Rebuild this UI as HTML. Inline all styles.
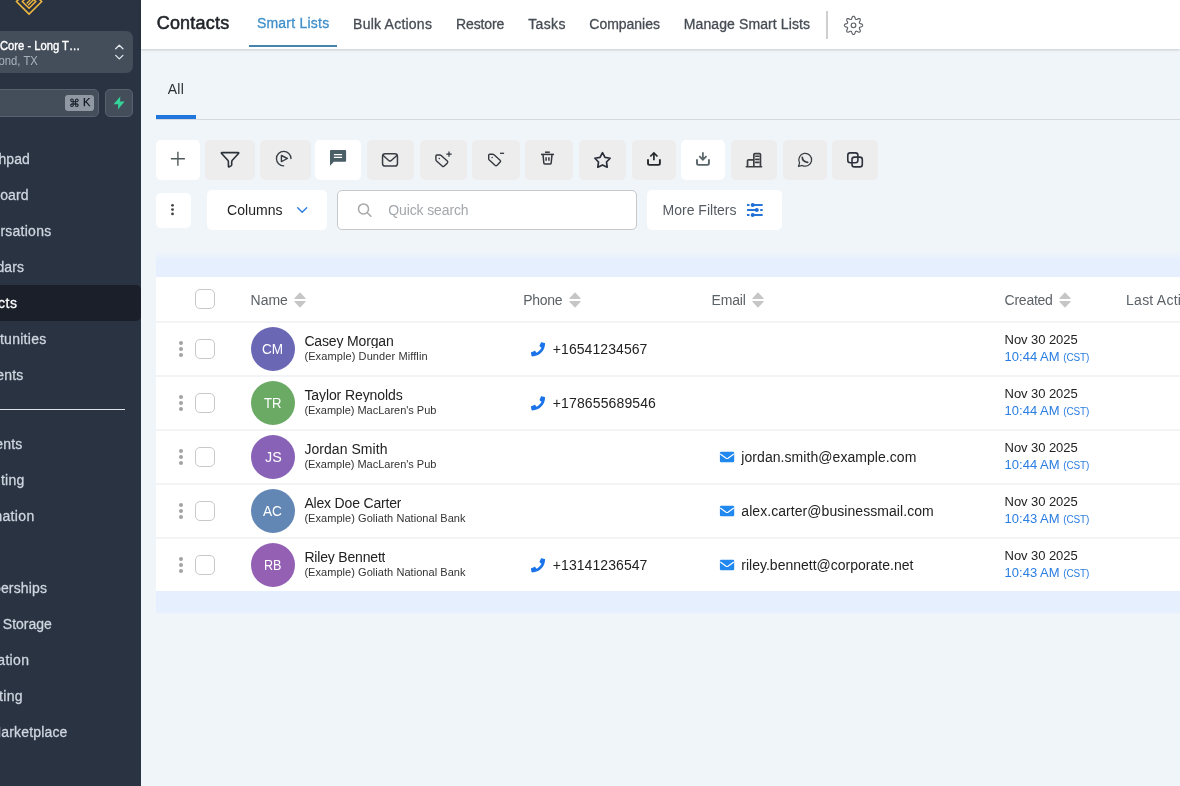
<!DOCTYPE html>
<html lang="en">
<head>
<meta charset="utf-8">
<title>Contacts</title>
<style>
*{box-sizing:border-box;margin:0;padding:0}
html,body{width:1180px;height:786px;overflow:hidden}
body{font-family:"Liberation Sans",sans-serif;background:#f0f5fa;position:relative;color:#222}
.abs{position:absolute;white-space:nowrap;line-height:1}
#txt{position:absolute;left:0;top:0;width:1180px;height:786px;overflow:hidden;will-change:transform}
.nav{font-size:14px;-webkit-text-stroke:0.28px #dfe4ea;clip-path:inset(-5px -5px -5px 0)}
/* sidebar */
#side{position:absolute;left:0;top:0;width:141px;height:786px;background:#2a3342;overflow:hidden}
#side .active{position:absolute;left:-10px;top:285px;width:151px;height:36px;background:#1b1f2a;border-radius:0 5px 5px 0}
#side .divider{position:absolute;left:0;top:409px;width:125px;height:1px;background:#dfe3e8}
#loc{position:absolute;left:-20px;top:31px;width:153px;height:42px;background:#444e5b;border-radius:7px}
#srch{position:absolute;left:-20px;top:89px;width:119px;height:28px;background:#444e5b;border:1px solid #566170;border-radius:5px}
#kbd{position:absolute;left:65px;top:95px;width:29px;height:16px;background:#9098a4;border-radius:3px}
#bolt{position:absolute;left:105px;top:89px;width:28px;height:28px;background:#444e5b;border:1px solid #566170;border-radius:5px}
svg{position:absolute;overflow:visible}
/* header */
#hdr{position:absolute;left:141px;top:0;width:1039px;height:49px;background:#fff;box-shadow:0 1px 3px rgba(0,0,0,.13),0 1px 2px rgba(0,0,0,.05)}
#tabline{position:absolute;left:249px;top:45px;width:88px;height:2px;background:#4584ad}
#vdiv{position:absolute;left:826px;top:11px;width:2px;height:28px;background:#cfcfcf}
#allbar{position:absolute;left:156px;top:115px;width:40px;height:4px;background:#2176de}
#allline{position:absolute;left:156px;top:119px;width:1024px;height:1px;background:#d5d9de}
/* buttons */
.btn{position:absolute;top:140px;height:40px;border-radius:5px;background:#ededee}
.btn.w{background:#fff}
#searchbox{position:absolute;left:337px;top:190px;width:300px;height:40px;background:#fff;border:1px solid #c8c8c8;border-radius:5px}
/* table */
#tbl{position:absolute;left:156px;top:252px;width:1024px;height:363px;background:linear-gradient(to bottom,#f0f5fa 0,#e5effd 8px,#e5effd 359.5px,#f0f5fa 362.5px)}
#tbl .white{position:absolute;left:0;top:25px;width:1024px;height:314px;background:#fff}
.hl{position:absolute;left:156px;width:1024px;height:2px;background:#f2f4f6}
.cb{position:absolute;left:195px;width:20px;height:20px;border:1px solid #c9c9c9;border-radius:5px;background:#fff}
.av{position:absolute;left:251px;width:44px;height:44px;border-radius:50%}
.avt{color:#fff}
.dot{position:absolute;left:179px;width:4px;height:4px;border-radius:50%;background:#a3a3a3}
.sort{position:absolute;top:292px;width:12px;height:16px}

</style>
</head>
<body>
<div id="side">
  <svg id="logo" style="left:0;top:-0.5px" width="60" height="20" viewBox="0 0 60 20" fill="none" stroke="#ecb742" stroke-width="1.6">
    <path d="M29.07 14.1 L16.5 1.55 L29.07 -11 L41.65 1.55 Z"/>
    <path d="M29.07 8.2 L22.4 1.55 L29.07 -5.1 L35.75 1.55 Z" stroke="#eeb03c"/>
    <path d="M26.6 3.5 L30.6 -0.5 M28.1 5.200 L33.5 -0.2" stroke-width="1.3"/>
  </svg>
  <div id="loc"></div>
  <svg style="left:115px;top:44px" width="9" height="16" viewBox="0 0 9 16" fill="none" stroke="#e3e7ec" stroke-width="1.3" stroke-linecap="round" stroke-linejoin="round"><path d="M0.7 4.8 L4.3 1.3 L7.9 4.8"/><path d="M0.7 11.4 L4.3 14.9 L7.9 11.4"/></svg>
  <div id="srch"></div>
  <div id="kbd"></div>
  <div id="bolt"></div>
  <svg style="left:0;top:0" width="141" height="130" viewBox="0 0 141 130"><path d="M120.300 96.400L113.500 104.350H118.250L117.900 109.400L124.600 101.550H120Z" fill="#34d399"/></svg>
  <div class="active"></div>
  <div class="divider"></div>
</div>
<div id="hdr"></div>
<div id="tabline"></div>
<div id="vdiv"></div>
<svg id="gear" style="left:0;top:0" width="1180" height="50" viewBox="0 0 1180 50" fill="none" stroke="#5c5f64" stroke-width="1.15" stroke-linejoin="round"><path d="M862.65 25.35L862.59 25.71L862.40 26.05L862.11 26.37L861.70 26.65L861.10 26.86L860.50 27.03L860.08 27.21L859.75 27.38L859.51 27.57L859.37 27.78L859.32 28.03L859.35 28.33L859.46 28.69L859.64 29.11L859.94 29.66L860.21 30.23L860.30 30.71L860.29 31.15L860.18 31.52L859.97 31.82L859.67 32.03L859.30 32.14L858.86 32.15L858.38 32.06L857.81 31.79L857.26 31.49L856.84 31.31L856.48 31.20L856.18 31.17L855.93 31.22L855.72 31.36L855.53 31.60L855.36 31.93L855.18 32.35L855.01 32.95L854.80 33.55L854.52 33.96L854.20 34.25L853.86 34.44L853.50 34.50L853.14 34.44L852.80 34.25L852.48 33.96L852.20 33.55L851.99 32.95L851.82 32.35L851.64 31.93L851.47 31.60L851.28 31.36L851.07 31.22L850.82 31.17L850.52 31.20L850.16 31.31L849.74 31.49L849.19 31.79L848.62 32.06L848.14 32.15L847.70 32.14L847.33 32.03L847.03 31.82L846.82 31.52L846.71 31.15L846.70 30.71L846.79 30.23L847.06 29.66L847.36 29.11L847.54 28.69L847.65 28.33L847.68 28.03L847.63 27.78L847.49 27.57L847.25 27.38L846.92 27.21L846.50 27.03L845.90 26.86L845.30 26.65L844.89 26.37L844.60 26.05L844.41 25.71L844.35 25.35L844.41 24.99L844.60 24.65L844.89 24.33L845.30 24.05L845.90 23.84L846.50 23.67L846.92 23.49L847.25 23.32L847.49 23.13L847.63 22.92L847.68 22.67L847.65 22.37L847.54 22.01L847.36 21.59L847.06 21.04L846.79 20.47L846.70 19.99L846.71 19.55L846.82 19.18L847.03 18.88L847.33 18.67L847.70 18.56L848.14 18.55L848.62 18.64L849.19 18.91L849.74 19.21L850.16 19.39L850.52 19.50L850.82 19.53L851.07 19.48L851.28 19.34L851.47 19.10L851.64 18.77L851.82 18.35L851.99 17.75L852.20 17.15L852.48 16.74L852.80 16.45L853.14 16.26L853.50 16.20L853.86 16.26L854.20 16.45L854.52 16.74L854.80 17.15L855.01 17.75L855.18 18.35L855.36 18.77L855.53 19.10L855.72 19.34L855.93 19.48L856.18 19.53L856.48 19.50L856.84 19.39L857.26 19.21L857.81 18.91L858.38 18.64L858.86 18.55L859.30 18.56L859.67 18.67L859.97 18.88L860.18 19.18L860.29 19.55L860.30 19.99L860.21 20.47L859.94 21.04L859.64 21.59L859.46 22.01L859.35 22.37L859.32 22.67L859.37 22.92L859.51 23.13L859.75 23.32L860.08 23.49L860.50 23.67L861.10 23.84L861.70 24.05L862.11 24.33L862.40 24.65L862.59 24.99Z"/><circle cx="853.5" cy="25.35" r="2.35"/></svg>
<div id="allbar"></div><div id="allline"></div>

<div class="btn w" style="left:156.0px;width:44.0px"></div>
<div class="btn" style="left:204.5px;width:50.5px"></div>
<div class="btn" style="left:260.0px;width:50.6px"></div>
<div class="btn w" style="left:315.2px;width:45.6px"></div>
<div class="btn" style="left:366.7px;width:47.0px"></div>
<div class="btn" style="left:419.8px;width:47.2px"></div>
<div class="btn" style="left:472.0px;width:47.9px"></div>
<div class="btn" style="left:525.3px;width:47.5px"></div>
<div class="btn" style="left:578.6px;width:47.5px"></div>
<div class="btn" style="left:632.2px;width:43.7px"></div>
<div class="btn w" style="left:681.0px;width:44.1px"></div>
<div class="btn" style="left:730.5px;width:46.9px"></div>
<div class="btn" style="left:783.2px;width:43.5px"></div>
<div class="btn" style="left:832.4px;width:45.4px"></div>
<div class="btn w" style="left:156px;top:193px;width:35px;height:35px"></div>
<div class="btn w" style="left:207px;top:190px;width:120px;height:40px"></div>
<div id="searchbox"></div>
<div class="btn w" style="left:646.6px;top:190px;width:135.6px;height:40px"></div>

<div id="tbl"><div class="white"></div></div>
<div class="hl" style="top:321px"></div>
<div class="hl" style="top:375px"></div>
<div class="hl" style="top:429px"></div>
<div class="hl" style="top:483px"></div>
<div class="hl" style="top:537px"></div>
<div class="cb" style="top:289px"></div>
<div class="cb" style="top:339px"></div>
<div class="av" style="top:327px;background:#6a67b5"></div>
<div class="dot" style="top:341px"></div>
<div class="dot" style="top:347px"></div>
<div class="dot" style="top:353px"></div>
<div class="cb" style="top:393px"></div>
<div class="av" style="top:381px;background:#6aaa64"></div>
<div class="dot" style="top:395px"></div>
<div class="dot" style="top:401px"></div>
<div class="dot" style="top:407px"></div>
<div class="cb" style="top:447px"></div>
<div class="av" style="top:435px;background:#8762b6"></div>
<div class="dot" style="top:449px"></div>
<div class="dot" style="top:455px"></div>
<div class="dot" style="top:461px"></div>
<div class="cb" style="top:501px"></div>
<div class="av" style="top:489px;background:#6387b5"></div>
<div class="dot" style="top:503px"></div>
<div class="dot" style="top:509px"></div>
<div class="dot" style="top:515px"></div>
<div class="cb" style="top:555px"></div>
<div class="av" style="top:543px;background:#9360b3"></div>
<div class="dot" style="top:557px"></div>
<div class="dot" style="top:563px"></div>
<div class="dot" style="top:569px"></div>
<svg class="sort" style="left:293.8px" viewBox="0 0 12 16" fill="#c6c6c6"><path d="M6 0.3 L11.6 6.3 Q12 7 11.2 7 L0.8 7 Q0 7 0.4 6.3 Z"/><path d="M6 15.7 L11.6 9.7 Q12 9 11.2 9 L0.8 9 Q0 9 0.4 9.7 Z"/></svg>
<svg class="sort" style="left:568.5px" viewBox="0 0 12 16" fill="#c6c6c6"><path d="M6 0.3 L11.6 6.3 Q12 7 11.2 7 L0.8 7 Q0 7 0.4 6.3 Z"/><path d="M6 15.7 L11.6 9.7 Q12 9 11.2 9 L0.8 9 Q0 9 0.4 9.7 Z"/></svg>
<svg class="sort" style="left:752.1px" viewBox="0 0 12 16" fill="#c6c6c6"><path d="M6 0.3 L11.6 6.3 Q12 7 11.2 7 L0.8 7 Q0 7 0.4 6.3 Z"/><path d="M6 15.7 L11.6 9.7 Q12 9 11.2 9 L0.8 9 Q0 9 0.4 9.7 Z"/></svg>
<svg class="sort" style="left:1058.8px" viewBox="0 0 12 16" fill="#c6c6c6"><path d="M6 0.3 L11.6 6.3 Q12 7 11.2 7 L0.8 7 Q0 7 0.4 6.3 Z"/><path d="M6 15.7 L11.6 9.7 Q12 9 11.2 9 L0.8 9 Q0 9 0.4 9.7 Z"/></svg>
<svg style="left:0;top:0" width="1180" height="786" viewBox="0 0 1180 786" fill="none" ><path d="M170.9 158.8H184.9M177.9 151.8V165.8" stroke="#505a5a" stroke-width="1.4"/><path d="M222 152.6H238.1Q239.2 152.6 238.5 153.5L232.3 160.3Q231.7 161 231.7 161.9V164.7Q231.7 165.5 231 165.9L229.3 166.8Q228.4 167.2 228.4 166.2V161.9Q228.4 161 227.8 160.3L221.6 153.500Q220.900 152.600 222 152.600Z" stroke="#2a3137" stroke-width="1.6" stroke-linejoin="round"/><path d="M290.95 158.60A7.25 7.25 0 1 0 283.70 165.85" stroke="#3a3f46" stroke-width="1.350" stroke-linecap="round"/><path d="M281.4 155.5L287.4 158.5L281.4 161.6Z" stroke="#3a3f46" stroke-width="1.4" stroke-linejoin="round"/><path d="M331 150H345.100Q346.100 150 346.100 151V160.800Q346.100 161.800 345.100 161.800H333.900L330 165.800V151Q330 150 331 150Z" fill="#4a5e66"/><path d="M333.900 154.550H342.100M333.900 157.300H342.100" stroke="#fff" stroke-width="1.35"/><rect x="382.550" y="153.750" width="14.900" height="12.300" rx="2.600" stroke="#3a3e45" stroke-width="1.500"/><path d="M382.900 155.300L389 160.700Q390 161.500 391 160.700L397.100 155.300" stroke="#3a3e45" stroke-width="1.500" stroke-linejoin="round"/><path d="M436.90 155.00H439.90Q440.60 155.00 441.20 155.50L447.30 161.00Q448.30 161.90 447.40 162.90L444.30 166.10Q443.30 167.00 442.20 166.10L436.50 160.90Q435.90 160.30 435.90 159.50V156.00Q435.90 155.00 436.90 155.00Z" stroke="#34383e" stroke-width="1.4" stroke-linejoin="round"/><circle cx="439.30" cy="158.40" r="0.75" fill="#34383e"/><path d="M446.300 154.100H451.700M449 151.400V156.800" stroke="#34383e" stroke-width="1.250"/><path d="M489.70 154.20H492.70Q493.40 154.20 494.00 154.70L500.10 160.20Q501.10 161.10 500.20 162.10L497.10 165.30Q496.10 166.20 495.00 165.30L489.30 160.10Q488.70 159.50 488.70 158.70V155.20Q488.70 154.20 489.70 154.20Z" stroke="#34383e" stroke-width="1.4" stroke-linejoin="round"/><circle cx="492.10" cy="157.60" r="0.75" fill="#34383e"/><path d="M500 153.300H504.100" stroke="#34383e" stroke-width="1.300"/><path d="M545 152.200H549.800" stroke="#33373d" stroke-width="1.500"/><path d="M541 154.400H554" stroke="#33373d" stroke-width="1.500"/><path d="M543 154.600L543.800 162.800Q543.950 164.050 545.200 164.050H549.800Q551.050 164.050 551.200 162.800L552 154.600" stroke="#33373d" stroke-width="1.500" stroke-linejoin="round"/><path d="M546.100 157.200V160.700M548.900 157.200V160.700" stroke="#33373d" stroke-width="1.500"/><path d="M602.50 152.70L604.97 157.30L610.11 158.23L606.49 162.00L607.20 167.17L602.50 164.90L597.80 167.17L598.51 162.00L594.89 158.23L600.03 157.30Z" stroke="#2b2f3a" stroke-width="1.700" stroke-linejoin="round"/><path d="M648 159.300V163.300Q648 164.850 649.550 164.850H658.350Q659.900 164.850 659.900 163.300V159.300" stroke="#25282c" stroke-width="1.900"/><path d="M653.900 160.300V153.200M650.300 156.500L653.900 152.900L657.500 156.500" stroke="#25282c" stroke-width="1.700" stroke-linejoin="miter"/><path d="M697 159.300V163.300Q697 164.850 698.550 164.850H707.350Q708.900 164.850 708.900 163.300V159.300" stroke="#586468" stroke-width="1.900"/><path d="M702.900 152.300V159.500M699.300 156.100L702.900 159.700L706.500 156.100" stroke="#586468" stroke-width="1.700"/><path d="M746.300 166.800H761.600" stroke="#3c3f42" stroke-width="1.600" stroke-linecap="round"/><path d="M753.850 166.800V154.550Q753.850 153.550 754.850 153.550H759.450Q760.450 153.550 760.450 154.550V166.800" stroke="#3c3f42" stroke-width="1.700"/><path d="M747.550 166.800V160.850Q747.550 159.850 748.550 159.850H753.850" stroke="#3c3f42" stroke-width="1.700"/><path d="M755.700 156.300H758.900M755.700 159.350H758.900M755.700 162.400H758.900" stroke="#3c3f42" stroke-width="1.600" stroke-linecap="round"/><path d="M802.20 165.45A6.4 6.4 0 1 0 799.55 162.80L798.500 166.500Z" stroke="#3a3d42" stroke-width="1.250" stroke-linejoin="round"/><path d="M802.300 157.300Q802.300 161.700 807.700 162.300" stroke="#3a3d42" stroke-width="1.700" stroke-linecap="round"/><rect x="847.800" y="152.900" width="10.100" height="9.800" rx="2.400" stroke="#2d313d" stroke-width="1.600"/><rect x="852" y="157.100" width="10.300" height="9.800" rx="2.400" stroke="#2d313d" stroke-width="1.600"/><circle cx="172.500" cy="205.3" r="1.400" fill="#444"/><circle cx="172.500" cy="209.6" r="1.400" fill="#444"/><circle cx="172.500" cy="213.9" r="1.400" fill="#444"/><path d="M297.700 207.800L302.200 212.300L306.700 207.800" stroke="#2a7de1" stroke-width="1.400" stroke-linecap="round" stroke-linejoin="round"/><circle cx="363.500" cy="208.900" r="5" stroke="#a8a8a8" stroke-width="1.500"/><path d="M367.300 212.700L370.900 216.200" stroke="#a8a8a8" stroke-width="1.500" stroke-linecap="round"/><rect x="747" y="204.05" width="2.500" height="1.9" fill="#1d6fd6"/><rect x="752.700" y="204.05" width="10" height="1.9" fill="#1d6fd6"/><circle cx="752.700" cy="205" r="2" fill="#1d6fd6"/><rect x="760.200" y="209.05" width="2.500" height="1.9" fill="#1d6fd6"/><rect x="747" y="209.05" width="10" height="1.9" fill="#1d6fd6"/><circle cx="756.800" cy="210" r="2" fill="#1d6fd6"/><rect x="747" y="214.05" width="2.500" height="1.9" fill="#1d6fd6"/><rect x="752.700" y="214.05" width="10" height="1.9" fill="#1d6fd6"/><circle cx="752.700" cy="215" r="2" fill="#1d6fd6"/><path transform="translate(530.900 342.2) scale(0.02773)" d="M493.400 24.600l-104-24c-11.300-2.600-22.900 3.300-27.500 13.900l-48 112c-4.200 9.800-1.400 21.300 6.900 28l60.600 49.600c-36 76.700-98.900 140.500-177.200 177.200l-49.600-60.600c-6.800-8.300-18.200-11.100-28-6.900l-112 48C3.900 366.500-2 378.100.6 389.400l24 104C27.100 504.200 36.700 512 48 512c256.100 0 464-207.500 464-464 0-11.200-7.700-20.900-18.600-23.400z" fill="#1a73e8"/><path transform="translate(530.900 396.2) scale(0.02773)" d="M493.400 24.600l-104-24c-11.300-2.600-22.900 3.300-27.500 13.900l-48 112c-4.200 9.800-1.400 21.300 6.900 28l60.600 49.600c-36 76.700-98.900 140.500-177.200 177.200l-49.600-60.600c-6.800-8.300-18.200-11.100-28-6.900l-112 48C3.900 366.500-2 378.100.6 389.400l24 104C27.100 504.200 36.700 512 48 512c256.100 0 464-207.500 464-464 0-11.200-7.700-20.900-18.600-23.400z" fill="#1a73e8"/><path transform="translate(530.900 558.2) scale(0.02773)" d="M493.400 24.600l-104-24c-11.300-2.600-22.900 3.300-27.500 13.900l-48 112c-4.200 9.800-1.400 21.300 6.900 28l60.600 49.600c-36 76.700-98.900 140.500-177.200 177.200l-49.600-60.600c-6.800-8.300-18.200-11.100-28-6.900l-112 48C3.900 366.500-2 378.100.6 389.400l24 104C27.100 504.200 36.700 512 48 512c256.100 0 464-207.500 464-464 0-11.200-7.700-20.900-18.600-23.400z" fill="#1a73e8"/><rect x="719.900" y="451.8" width="14.300" height="10.500" rx="1.300" fill="#2188f0"/><path d="M720.300 454.1L726.100 458.2Q727.050 458.8 728 458.2L733.800 454.1" stroke="#fff" stroke-width="1.200" fill="none"/><rect x="719.900" y="505.8" width="14.300" height="10.500" rx="1.300" fill="#2188f0"/><path d="M720.300 508.1L726.100 512.2Q727.050 512.8 728 512.2L733.800 508.1" stroke="#fff" stroke-width="1.200" fill="none"/><rect x="719.900" y="559.8" width="14.300" height="10.500" rx="1.300" fill="#2188f0"/><path d="M720.300 562.0999999999999L726.100 566.1999999999999Q727.050 566.8 728 566.1999999999999L733.800 562.0999999999999" stroke="#fff" stroke-width="1.200" fill="none"/></svg>
<div id="txt">
<span id="h_contacts" class="abs" style="left:156.70px;top:13.76px;font-size:18px;letter-spacing:0.208px;color:#1f2328;-webkit-text-stroke:0.55px #1f2328">Contacts</span>
<span id="h_smart" class="abs" style="left:256.90px;top:16.15px;font-size:14px;letter-spacing:0.228px;color:#3f8fca;-webkit-text-stroke:0.3px #3f8fca">Smart Lists</span>
<span id="h_bulk" class="abs" style="left:353.10px;top:17.15px;font-size:14px;letter-spacing:0.230px;color:#464c54;-webkit-text-stroke:0.3px #464c54">Bulk Actions</span>
<span id="h_restore" class="abs" style="left:456.00px;top:17.15px;font-size:14px;letter-spacing:-0.105px;color:#464c54;-webkit-text-stroke:0.3px #464c54">Restore</span>
<span id="h_tasks" class="abs" style="left:528.30px;top:17.15px;font-size:14px;letter-spacing:0.326px;color:#464c54;-webkit-text-stroke:0.3px #464c54">Tasks</span>
<span id="h_comp" class="abs" style="left:589.30px;top:17.15px;font-size:14px;letter-spacing:-0.016px;color:#464c54;-webkit-text-stroke:0.3px #464c54">Companies</span>
<span id="h_manage" class="abs" style="left:683.80px;top:17.15px;font-size:14px;letter-spacing:0.100px;color:#464c54;-webkit-text-stroke:0.3px #464c54">Manage Smart Lists</span>
<span id="all" class="abs" style="left:167.70px;top:82.15px;font-size:14px;letter-spacing:0.269px;color:#2c3137">All</span>
<span id="cols" class="abs" style="left:227.10px;top:203.15px;font-size:14px;letter-spacing:0.025px;color:#222">Columns</span>
<span id="qs" class="abs" style="left:388.30px;top:203.15px;font-size:14px;letter-spacing:-0.128px;color:#a3a7ad">Quick search</span>
<span id="mf" class="abs" style="left:662.60px;top:203.15px;font-size:14px;letter-spacing:-0.001px;color:#555b63">More Filters</span>
<span id="th_name" class="abs" style="left:250.60px;top:293.15px;font-size:14px;letter-spacing:-0.020px;color:#5b6268">Name</span>
<span id="th_phone" class="abs" style="left:523.20px;top:293.15px;font-size:14px;letter-spacing:-0.271px;color:#5b6268">Phone</span>
<span id="th_email" class="abs" style="left:711.50px;top:293.15px;font-size:14px;letter-spacing:-0.179px;color:#5b6268">Email</span>
<span id="th_created" class="abs" style="left:1004.60px;top:293.15px;font-size:14px;letter-spacing:-0.252px;color:#5b6268">Created</span>
<span id="th_last" class="abs" style="left:1126.10px;top:293.15px;font-size:14px;letter-spacing:0.235px;color:#5b6268">Last Activity</span>
<span id="r0_nm" class="abs" style="left:304.40px;top:334.15px;font-size:14px;letter-spacing:-0.159px;color:#222;height:14px;overflow:hidden">Casey Morgan</span>
<span id="r0_co" class="abs" style="left:304.40px;top:350.69px;font-size:11px;letter-spacing:0.102px;color:#333">(Example) Dunder Mifflin</span>
<span id="r0_ph" class="abs" style="left:552.80px;top:342.15px;font-size:14px;letter-spacing:0.070px;color:#222">+16541234567</span>
<span id="r0_dt" class="abs" style="left:1004.60px;top:333.00px;font-size:13px;letter-spacing:-0.063px;color:#222">Nov 30 2025</span>
<span id="r0_tm" class="abs" style="left:1004.60px;top:350.00px;font-size:13px;letter-spacing:0.009px;color:#2a7de1">10:44 AM</span>
<span id="r0_tz" class="abs" style="left:1063.20px;top:352.54px;font-size:10px;letter-spacing:-0.118px;color:#2a7de1">(CST)</span>
<span id="r1_nm" class="abs" style="left:304.40px;top:388.15px;font-size:14px;letter-spacing:-0.094px;color:#222;height:14px;overflow:hidden">Taylor Reynolds</span>
<span id="r1_co" class="abs" style="left:304.40px;top:404.69px;font-size:11px;letter-spacing:-0.014px;color:#333">(Example) MacLaren's Pub</span>
<span id="r1_ph" class="abs" style="left:552.80px;top:396.15px;font-size:14px;letter-spacing:0.124px;color:#222">+178655689546</span>
<span id="r1_dt" class="abs" style="left:1004.60px;top:387.00px;font-size:13px;letter-spacing:-0.063px;color:#222">Nov 30 2025</span>
<span id="r1_tm" class="abs" style="left:1004.60px;top:404.00px;font-size:13px;letter-spacing:0.009px;color:#2a7de1">10:44 AM</span>
<span id="r1_tz" class="abs" style="left:1063.20px;top:406.54px;font-size:10px;letter-spacing:-0.118px;color:#2a7de1">(CST)</span>
<span id="r2_nm" class="abs" style="left:304.40px;top:442.15px;font-size:14px;letter-spacing:0.056px;color:#222;height:14px;overflow:hidden">Jordan Smith</span>
<span id="r2_co" class="abs" style="left:304.40px;top:458.69px;font-size:11px;letter-spacing:-0.014px;color:#333">(Example) MacLaren's Pub</span>
<span id="r2_em" class="abs" style="left:741.30px;top:450.15px;font-size:14px;letter-spacing:0.059px;color:#222">jordan.smith@example.com</span>
<span id="r2_dt" class="abs" style="left:1004.60px;top:441.00px;font-size:13px;letter-spacing:-0.063px;color:#222">Nov 30 2025</span>
<span id="r2_tm" class="abs" style="left:1004.60px;top:458.00px;font-size:13px;letter-spacing:0.009px;color:#2a7de1">10:44 AM</span>
<span id="r2_tz" class="abs" style="left:1063.20px;top:460.54px;font-size:10px;letter-spacing:-0.118px;color:#2a7de1">(CST)</span>
<span id="r3_nm" class="abs" style="left:304.40px;top:496.15px;font-size:14px;letter-spacing:-0.178px;color:#222;height:14px;overflow:hidden">Alex Doe Carter</span>
<span id="r3_co" class="abs" style="left:304.40px;top:512.69px;font-size:11px;letter-spacing:0.051px;color:#333">(Example) Goliath National Bank</span>
<span id="r3_em" class="abs" style="left:741.30px;top:504.15px;font-size:14px;letter-spacing:0.058px;color:#222">alex.carter@businessmail.com</span>
<span id="r3_dt" class="abs" style="left:1004.60px;top:495.00px;font-size:13px;letter-spacing:-0.063px;color:#222">Nov 30 2025</span>
<span id="r3_tm" class="abs" style="left:1004.60px;top:512.00px;font-size:13px;letter-spacing:0.009px;color:#2a7de1">10:43 AM</span>
<span id="r3_tz" class="abs" style="left:1063.20px;top:514.53px;font-size:10px;letter-spacing:-0.118px;color:#2a7de1">(CST)</span>
<span id="r4_nm" class="abs" style="left:304.40px;top:550.15px;font-size:14px;letter-spacing:-0.182px;color:#222;height:14px;overflow:hidden">Riley Bennett</span>
<span id="r4_co" class="abs" style="left:304.40px;top:566.69px;font-size:11px;letter-spacing:0.051px;color:#333">(Example) Goliath National Bank</span>
<span id="r4_ph" class="abs" style="left:552.80px;top:558.15px;font-size:14px;letter-spacing:0.070px;color:#222">+13141236547</span>
<span id="r4_em" class="abs" style="left:741.30px;top:558.15px;font-size:14px;letter-spacing:0.006px;color:#222">riley.bennett@corporate.net</span>
<span id="r4_dt" class="abs" style="left:1004.60px;top:549.00px;font-size:13px;letter-spacing:-0.063px;color:#222">Nov 30 2025</span>
<span id="r4_tm" class="abs" style="left:1004.60px;top:566.00px;font-size:13px;letter-spacing:0.009px;color:#2a7de1">10:43 AM</span>
<span id="r4_tz" class="abs" style="left:1063.20px;top:568.53px;font-size:10px;letter-spacing:-0.118px;color:#2a7de1">(CST)</span>
<span id="av0" class="abs" style="left:262.30px;top:342.15px;font-size:14px;letter-spacing:0.000px;transform:scaleX(0.9687);transform-origin:0 0;color:#fff">CM</span>
<span id="av1" class="abs" style="left:264.30px;top:396.15px;font-size:14px;letter-spacing:0.000px;transform:scaleX(0.9372);transform-origin:0 0;color:#fff">TR</span>
<span id="av2" class="abs" style="left:264.60px;top:450.15px;font-size:14px;letter-spacing:0.000px;transform:scaleX(1.0218);transform-origin:0 0;color:#fff">JS</span>
<span id="av3" class="abs" style="left:263.40px;top:504.15px;font-size:14px;letter-spacing:0.000px;transform:scaleX(0.9767);transform-origin:0 0;color:#fff">AC</span>
<span id="av4" class="abs" style="left:264.30px;top:558.15px;font-size:14px;letter-spacing:0.000px;transform:scaleX(0.8996);transform-origin:0 0;color:#fff">RB</span>
<span id="loc1" class="abs" style="left:0.20px;top:40.02px;font-size:12.5px;letter-spacing:0.000px;transform:scaleX(0.8959);transform-origin:0 0;color:#fff;-webkit-text-stroke:0.4px #fff">Core - Long T…</span>
<span id="loc2" class="abs" style="right:1142.70px;top:55.34px;font-size:12px;letter-spacing:0.000px;transform:scaleX(0.9399);transform-origin:100% 0;color:#aab1bb">Richmond, TX</span>
<span id="kbd_c" class="abs" style="left:69.00px;top:98.29px;font-size:11px;letter-spacing:0.000px;transform:scaleX(0.9818);transform-origin:0 0;color:#111820;-webkit-text-stroke:0.2px #111820;font-family:"DejaVu Sans",sans-serif">⌘</span>
<span id="kbd_k" class="abs" style="left:83.40px;top:96.77px;font-size:11.5px;letter-spacing:0.000px;transform:scaleX(0.9646);transform-origin:0 0;color:#111820;-webkit-text-stroke:0.25px #111820">K</span>
<span id="nav_Launchpad164" class="abs nav" style="right:1150.13px;top:152.15px;letter-spacing:0.073px;color:#cfd6e0;-webkit-text-stroke-color:#cfd6e0">Launchpad</span>
<span id="nav_Dashboard200" class="abs nav" style="right:1151.27px;top:188.15px;letter-spacing:0.135px;color:#cfd6e0;-webkit-text-stroke-color:#cfd6e0">Dashboard</span>
<span id="nav_Conversations236" class="abs nav" style="right:1128.54px;top:224.15px;letter-spacing:0.256px;color:#cfd6e0;-webkit-text-stroke-color:#cfd6e0">Conversations</span>
<span id="nav_Calendars272" class="abs nav" style="right:1155.76px;top:260.15px;letter-spacing:0.141px;color:#cfd6e0;-webkit-text-stroke-color:#cfd6e0">Calendars</span>
<span id="nav_Contacts308" class="abs nav" style="right:1162.61px;top:296.15px;letter-spacing:0.486px;color:#fff;-webkit-text-stroke-color:#fff">Contacts</span>
<span id="nav_Opportunities344" class="abs nav" style="right:1133.52px;top:332.15px;letter-spacing:0.277px;color:#cfd6e0;-webkit-text-stroke-color:#cfd6e0">Opportunities</span>
<span id="nav_Payments380" class="abs nav" style="right:1156.50px;top:368.15px;letter-spacing:0.197px;color:#cfd6e0;-webkit-text-stroke-color:#cfd6e0">Payments</span>
<span id="nav_AI_Agents449" class="abs nav" style="right:1157.50px;top:437.15px;letter-spacing:0.197px;color:#cfd6e0;-webkit-text-stroke-color:#cfd6e0">AI Agents</span>
<span id="nav_Marketing485" class="abs nav" style="right:1155.29px;top:473.15px;letter-spacing:0.314px;color:#cfd6e0;-webkit-text-stroke-color:#cfd6e0">Marketing</span>
<span id="nav_Automation521" class="abs nav" style="right:1145.46px;top:509.15px;letter-spacing:0.343px;color:#cfd6e0;-webkit-text-stroke-color:#cfd6e0">Automation</span>
<span id="nav_Memberships593" class="abs nav" style="right:1132.96px;top:581.15px;letter-spacing:0.137px;color:#cfd6e0;-webkit-text-stroke-color:#cfd6e0">Memberships</span>
<span id="nav_Media_Storage629" class="abs nav" style="right:1128.10px;top:617.15px;letter-spacing:0.003px;color:#cfd6e0;-webkit-text-stroke-color:#cfd6e0">Media Storage</span>
<span id="nav_Reputation665" class="abs nav" style="right:1150.66px;top:653.15px;letter-spacing:0.341px;color:#cfd6e0;-webkit-text-stroke-color:#cfd6e0">Reputation</span>
<span id="nav_Reporting701" class="abs nav" style="right:1157.09px;top:689.15px;letter-spacing:0.314px;color:#cfd6e0;-webkit-text-stroke-color:#cfd6e0">Reporting</span>
<span id="nav_App_Marketplace737" class="abs nav" style="right:1112.42px;top:725.15px;letter-spacing:0.176px;color:#cfd6e0;-webkit-text-stroke-color:#cfd6e0">App Marketplace</span>
</div>
</body>
</html>
